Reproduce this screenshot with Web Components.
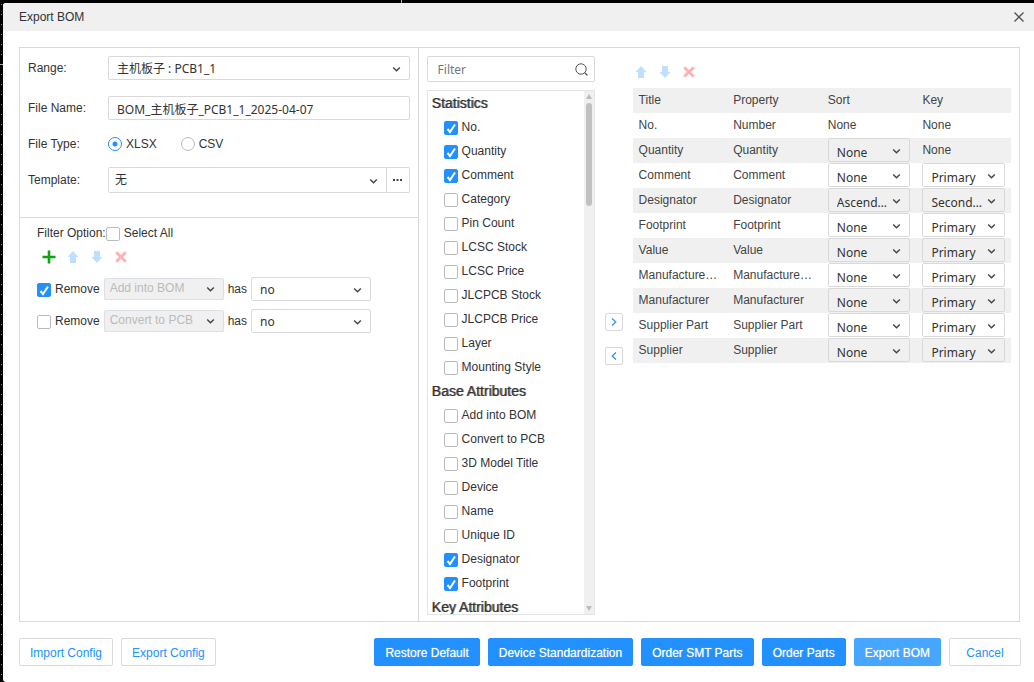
<!DOCTYPE html>
<html lang="en">
<head>
<meta charset="utf-8">
<title>Export BOM</title>
<style>
  html {
    height: 100%;
  }
  body {
    box-sizing: border-box;
    height: 100%;
    margin: 0;
    padding: 3px 0 0 3px;
    overflow: hidden;
    /* editor canvas behind the dialog: two axis ticks and the dot grid */
    background:
      linear-gradient(#aaa, #aaa) 401px 0 / 1px 3px no-repeat,
      linear-gradient(#aaa, #aaa) 0 64px / 3px 1px no-repeat,
      conic-gradient(from 90deg at 9px 9px, #888 90deg, transparent 0) 2px 5px / 10px 10px,
      #000;
    font-family: "Liberation Sans", Arial, "Noto Sans CJK SC", sans-serif;
    font-size: 12px;
    line-height: 16px;
    color: #333;
  }
</style>
</head>
<body>
  <export-dialog heading="Export BOM">
    <bom-options></bom-options>
    <attribute-list></attribute-list>
    <column-table></column-table>
    <dialog-button slot="left">Import Config</dialog-button>
    <dialog-button slot="left">Export Config</dialog-button>
    <dialog-button slot="right" kind="primary">Restore Default</dialog-button>
    <dialog-button slot="right" kind="primary">Device Standardization</dialog-button>
    <dialog-button slot="right" kind="primary">Order SMT Parts</dialog-button>
    <dialog-button slot="right" kind="primary">Order Parts</dialog-button>
    <dialog-button slot="right" kind="primary hover">Export BOM</dialog-button>
    <dialog-button slot="right">Cancel</dialog-button>
  </export-dialog>

<script>
  // styles that every element with form controls needs
  const controls = `
    * { box-sizing: border-box; }
    button, input, select {
      margin: 0;
      font: inherit;
      color: inherit;
    }
    .text-input, select {
      display: block;
      width: 100%;
      height: 24px;
      padding: 2px 8px 0;
      border: 1px solid #d9d9d9;
      border-radius: 2px;
      outline: none;
      background: transparent;
      font-family: "Noto Sans", "Noto Sans CJK SC", sans-serif;
      font-size: 12px;
    }
    select {
      appearance: none;
      padding-right: 21px;
      text-overflow: ellipsis;
      white-space: nowrap;
      overflow: hidden;
    }
    .select {
      display: grid;
      align-items: center;
    }
    .select > * { grid-area: 1 / 1; }
    .select svg {
      justify-self: end;
      margin: 2px 9px 0 0;
      pointer-events: none;
    }
    .icon-button {
      display: grid;
      place-items: center;
      width: 16px;
      height: 16px;
      padding: 0;
      border: 0;
      background: none;
    }
    .toolbar {
      display: flex;
      gap: 8px;
    }
    svg { display: block; }
  `;

  const icons = {
    chevron: `<svg width="9" height="7" viewBox="0 0 9 7"><path d="M1.200 1.500l3.300 3.300 3.300-3.300" fill="none" stroke="#444" stroke-width="1.400"/></svg>`,
    up: `<svg width="12" height="12" viewBox="0 0 12 12"><path d="M6 0l5.500 6H9v6H3V6H.5z" fill="#bfdfff"/></svg>`,
    down: `<svg width="12" height="12" viewBox="0 0 12 12"><path d="M6 12L.5 6H3V0h6v6h2.500z" fill="#bfdfff"/></svg>`,
    remove: `<svg width="12" height="12" viewBox="0 0 12 12"><path d="M1.200 1.200l9.600 9.600M10.800 1.200L1.200 10.800" stroke="#ffb0b0" stroke-width="2.800"/></svg>`,
    add: `<svg width="14" height="14" viewBox="0 0 14 14"><path d="M7 .5v13M.5 7h13" stroke="#13a013" stroke-width="2.600"/></svg>`,
    close: `<svg width="10" height="10" viewBox="0 0 10 10"><path d="M.5 .5l9 9M9.500 .5l-9 9" stroke="#555" stroke-width="1.400"/></svg>`,
    search: `<svg width="13" height="13" viewBox="0 0 13 13"><circle cx="6" cy="6" r="5.200" fill="none" stroke="#555"/><path d="M9.700 9.700l2.800 2.800" stroke="#555" stroke-width="1.200"/></svg>`,
    right: `<svg width="6" height="8" viewBox="0 0 6 8"><path d="M1 .5L4.800 4 1 7.500" fill="none" stroke="#2291ff" stroke-width="1.200"/></svg>`,
    left: `<svg width="6" height="8" viewBox="0 0 6 8"><path d="M5 .5L1.200 4 5 7.500" fill="none" stroke="#2291ff" stroke-width="1.200"/></svg>`,
  };

  function select(label, options, attrs = "") {
    return `
      <span class="select">
        <select aria-label="${label}" ${attrs}>
          ${options.map((option) => `<option>${option}</option>`).join("")}
        </select>
        ${icons.chevron}
      </span>`;
  }

  function iconButton(icon, label) {
    return `<button type="button" class="icon-button" aria-label="${label}">${icons[icon]}</button>`;
  }

  customElements.define(
    "dialog-button",
    class DialogButton extends HTMLElement {
      constructor() {
        super();
        this.attachShadow({mode: "open"});
      }

      connectedCallback() {
        this.shadowRoot.innerHTML = `
          <style>
            :host { display: block; }
            button {
              display: block;
              box-sizing: border-box;
              min-width: 72px;
              height: 28px;
              padding: 2px 10px 0;
              border: 1px solid #d9d9d9;
              border-radius: 2px;
              background: #fff;
              color: #2291ff;
              font: inherit;
              white-space: nowrap;
            }
            .primary {
              border-color: #2291ff;
              background: #2291ff;
              color: #fff;
              text-shadow: 0 0 1px rgba(255, 255, 255, 0.6);
            }
            .hover {
              border-color: #47a6ff;
              background: #47a6ff;
            }
          </style>
          <button type="button" class="${this.getAttribute("kind") || ""}"><slot></slot></button>
        `;
      }
    }
  );

  customElements.define(
    "check-box",
    class CheckBox extends HTMLElement {
      constructor() {
        super();
        this.attachShadow({mode: "open"});
      }

      connectedCallback() {
        this.shadowRoot.innerHTML = `
          <style>
            :host { display: inline-block; }
            label {
              display: flex;
              gap: 4px;
              white-space: nowrap;
            }
            .box {
              display: grid;
              place-items: center;
              margin-top: 2px;
              height: 14px;
            }
            .box > * { grid-area: 1 / 1; }
            input {
              appearance: none;
              box-sizing: border-box;
              width: 14px;
              height: 14px;
              margin: 0;
              border: 1px solid #bbb;
              border-radius: 2px;
              background: #fff;
            }
            input:checked {
              border-color: #2291ff;
              background: #2291ff;
            }
            svg {
              display: none;
              pointer-events: none;
            }
            input:checked + svg { display: block; }
          </style>
          <label>
            <span class="box">
              <input type="checkbox" ${this.hasAttribute("checked") ? "checked" : ""}>
              <svg width="14" height="14" viewBox="0 0 14 14"><path d="M3.500 8l2.500 3L11 3.500" fill="none" stroke="#fff" stroke-width="2"/></svg>
            </span>
            <slot></slot>
          </label>
        `;
      }
    }
  );

  customElements.define(
    "filter-rule",
    class FilterRule extends HTMLElement {
      constructor() {
        super();
        this.attachShadow({mode: "open"});
      }

      connectedCallback() {
        const checked = this.hasAttribute("checked") ? "checked" : "";
        this.shadowRoot.innerHTML = `
          <style>
            ${controls}
            :host {
              display: flex;
              align-items: center;
              gap: 4px;
              height: 24px;
            }
            .select { width: 120px; }
            select:disabled {
              height: 22px;
              padding: 0 21px 2px 5px;
              border-color: #dcdfe6;
              background: #f0f0f0;
              color: #bbb;
              opacity: 1;
              font-family: inherit;
            }
            select:disabled + svg { margin-top: 0; }
          </style>
          <check-box ${checked}>Remove</check-box>
          ${select("Property", [this.getAttribute("property")], "disabled")}
          <span>has</span>
          ${select("Value", ["no", "yes"])}
        `;
      }
    }
  );

  customElements.define(
    "bom-options",
    class BomOptions extends HTMLElement {
      constructor() {
        super();
        this.attachShadow({mode: "open"});
      }

      connectedCallback() {
        this.shadowRoot.innerHTML = `
          <style>
            ${controls}
            :host {
              display: block;
              box-sizing: border-box;
              flex: 0 0 calc(40% - 1px);
              border-right: 1px solid #d9d9d9;
            }
            .fields {
              display: grid;
              grid-template-columns: 80px 1fr;
              grid-template-rows: 24px 24px 15px 26px;
              align-items: center;
              row-gap: 16px;
              padding: 8px 8px 24px;
              border-bottom: 1px solid #d9d9d9;
            }
            .types {
              display: flex;
              gap: 24px;
            }
            .types label {
              display: flex;
              align-items: center;
              gap: 4px;
            }
            input[type=radio] {
              appearance: none;
              width: 14px;
              height: 14px;
              border: 1px solid #bbb;
              border-radius: 50%;
            }
            input[type=radio]:checked {
              border-color: #2291ff;
              background: radial-gradient(circle, #2291ff 2px, transparent 3px);
            }
            .template { display: flex; }
            .template .select { flex: 1; }
            .template select {
              height: 26px;
              padding: 0 21px 0 6px;
              border-radius: 2px 0 0 2px;
            }
            .more {
              display: grid;
              place-items: center;
              width: 23px;
              padding: 0;
              border: 1px solid #d9d9d9;
              border-left: 0;
              border-radius: 0 2px 2px 0;
              background: #fff;
            }
            .filters { padding: 7px 17px; }
            .head {
              display: flex;
              align-items: center;
              margin-bottom: 8px;
            }
            .filters .toolbar {
              padding: 0 4px;
              margin-bottom: 12px;
            }
            filter-rule + filter-rule { margin-top: 8px; }
          </style>

          <div class="fields">
            <label for="range">Range:</label>
            <span class="select">
              <select id="range"><option>主机板子 : PCB1_1</option></select>
              ${icons.chevron}
            </span>
            <label for="file-name">File Name:</label>
            <input class="text-input" id="file-name" value="BOM_主机板子_PCB1_1_2025-04-07">
            <span id="type-label">File Type:</span>
            <div class="types" role="radiogroup" aria-labelledby="type-label">
              <label><input type="radio" name="type" checked>XLSX</label>
              <label><input type="radio" name="type">CSV</label>
            </div>
            <label for="template">Template:</label>
            <div class="template">
              <span class="select">
                <select id="template"><option>无</option></select>
                ${icons.chevron}
              </span>
              <button type="button" class="more" aria-label="Manage templates">
                <svg width="9" height="2" viewBox="0 0 9 2"><path d="M0 0h2v2H0zM3.500 0h2v2h-2zM7 0h2v2H7z" fill="#444"/></svg>
              </button>
            </div>
          </div>

          <div class="filters">
            <div class="head"><span>Filter Option:</span><check-box>Select All</check-box></div>
            <div class="toolbar">
              ${iconButton("add", "Add")}
              ${iconButton("up", "Move up")}
              ${iconButton("down", "Move down")}
              ${iconButton("remove", "Delete")}
            </div>
            <filter-rule property="Add into BOM" checked></filter-rule>
            <filter-rule property="Convert to PCB"></filter-rule>
          </div>
        `;
      }
    }
  );

  const attributes = [
    ["Statistics", ["No.", "Quantity", "Comment", "Category", "Pin Count", "LCSC Stock", "LCSC Price",
      "JLCPCB Stock", "JLCPCB Price", "Layer", "Mounting Style"]],
    ["Base Attributes", ["Add into BOM", "Convert to PCB", "3D Model Title", "Device", "Name",
      "Unique ID", "Designator", "Footprint"]],
    ["Key Attributes", []],
  ];
  const picked = ["No.", "Quantity", "Comment", "Designator", "Footprint"];

  customElements.define(
    "attribute-list",
    class AttributeList extends HTMLElement {
      constructor() {
        super();
        this.attachShadow({mode: "open"});
      }

      connectedCallback() {
        this.shadowRoot.innerHTML = `
          <style>
            ${controls}
            :host {
              display: flex;
              box-sizing: border-box;
              flex: 0 0 176px;
              flex-direction: column;
              gap: 8px;
              padding: 8px 0 6px 8px;
              min-height: 0;
            }
            .search {
              display: grid;
              align-items: center;
            }
            .search > * { grid-area: 1 / 1; }
            .search svg {
              justify-self: end;
              margin-right: 7px;
            }
            .search input {
              height: 26px;
              padding: 0 28px 0 10px;
            }
            input::placeholder {
              color: #777;
              opacity: 1;
            }
            .list {
              display: flex;
              flex: 1;
              min-height: 0;
              border: 1px solid #e4e4e4;
            }
            .items {
              flex: 1;
              overflow: hidden;
              padding-left: 4px;
            }
            h3 {
              margin: 0;
              font-size: 14px;
              font-weight: normal;
              line-height: 24px;
              text-shadow: 1px 0 0 rgba(51, 51, 51, 0.6);
            }
            check-box {
              display: block;
              height: 24px;
              padding: 4px 0 4px 12px;
              box-sizing: border-box;
            }
            .bar {
              display: flex;
              flex-direction: column;
              align-items: center;
              width: 10px;
              padding: 3px 0;
              background: #f0f0f0;
            }
            .thumb {
              width: 6px;
              height: 20%;
              margin: 4px 0 auto;
              border-radius: 3px;
              background: #c1c1c1;
            }
          </style>
          <div class="search">
            <input class="text-input" type="text" placeholder="Filter" aria-label="Filter">
            ${icons.search}
          </div>
          <div class="list">
            <div class="items">
              ${attributes.map(([group, names]) => `
                <h3>${group}</h3>
                ${names.map((name) => `<check-box ${picked.includes(name) ? "checked" : ""}>${name}</check-box>`).join("")}
              `).join("")}
            </div>
            <div class="bar">
              <svg width="6" height="5" viewBox="0 0 6 5"><path d="M3 0l3 5H0z" fill="#bbb"/></svg>
              <div class="thumb"></div>
              <svg width="6" height="5" viewBox="0 0 6 5"><path d="M3 5L0 0h6z" fill="#bbb"/></svg>
            </div>
          </div>
        `;
      }
    }
  );

  // title, property, sort, key; null when the value can't be changed
  const sorts = ["None", "Ascending", "Descending"];
  const keys = ["Primary", "Secondary"];
  const columns = [
    ["No.", "Number", null, null],
    ["Quantity", "Quantity", "None", null],
    ["Comment", "Comment", "None", "Primary"],
    ["Designator", "Designator", "Ascending", "Secondary"],
    ["Footprint", "Footprint", "None", "Primary"],
    ["Value", "Value", "None", "Primary"],
    ["Manufacturer Part", "Manufacturer Part", "None", "Primary"],
    ["Manufacturer", "Manufacturer", "None", "Primary"],
    ["Supplier Part", "Supplier Part", "None", "Primary"],
    ["Supplier", "Supplier", "None", "Primary"],
  ];

  customElements.define(
    "column-table",
    class ColumnTable extends HTMLElement {
      constructor() {
        super();
        this.attachShadow({mode: "open"});
      }

      cell(label, options, value) {
        if (value === null) {
          return "<td>None</td>";
        }
        const sorted = [value, ...options.filter((option) => option !== value)];
        return `<td>${select(label, sorted)}</td>`;
      }

      connectedCallback() {
        this.shadowRoot.innerHTML = `
          <style>
            ${controls}
            :host {
              display: flex;
              box-sizing: border-box;
              flex: 1;
              gap: 10px;
              min-width: 0;
              padding: 8px 8px 0 10px;
            }
            .transfer {
              display: flex;
              flex-direction: column;
              justify-content: center;
              gap: 16px;
            }
            .transfer .icon-button {
              width: 18px;
              height: 18px;
              border: 1px solid #d9d9d9;
              border-radius: 2px;
            }
            .columns {
              flex: 1;
              min-width: 0;
            }
            .toolbar { padding: 8px 0; }
            table {
              width: 100%;
              table-layout: fixed;
              border-collapse: collapse;
              color: #444;
            }
            th, td {
              height: 25px;
              padding: 0 6px;
              overflow: hidden;
              font-weight: normal;
              line-height: 24px;
              text-align: left;
              text-overflow: ellipsis;
              vertical-align: top;
              white-space: nowrap;
            }
            thead tr, tbody tr:nth-child(even) { background: #f0f0f0; }
            select { color: #333; }
          </style>
          <div class="transfer">
            ${iconButton("right", "Add column")}
            ${iconButton("left", "Remove column")}
          </div>
          <div class="columns">
            <div class="toolbar">
              ${iconButton("up", "Move up")}
              ${iconButton("down", "Move down")}
              ${iconButton("remove", "Delete")}
            </div>
            <table>
              <thead>
                <tr><th>Title</th><th>Property</th><th>Sort</th><th>Key</th></tr>
              </thead>
              <tbody>
                ${columns.map(([title, property, sort, key]) => `
                  <tr>
                    <td>${title}</td>
                    <td>${property}</td>
                    ${this.cell(`${title} sort`, sorts, sort)}
                    ${this.cell(`${title} key`, keys, key)}
                  </tr>
                `).join("")}
              </tbody>
            </table>
          </div>
        `;
      }
    }
  );

  customElements.define(
    "export-dialog",
    class ExportDialog extends HTMLElement {
      constructor() {
        super();
        this.attachShadow({mode: "open"});
      }

      connectedCallback() {
        this.shadowRoot.innerHTML = `
          <style>
            ${controls}
            :host {
              display: flex;
              flex-direction: column;
              height: 100%;
              overflow: hidden;
              border-radius: 3px 0 0 3px;
              background: #fff;
            }
            header {
              display: flex;
              align-items: center;
              justify-content: space-between;
              height: 28px;
              padding: 0 7px 0 16px;
              background: #f0f0f0;
            }
            h2 {
              margin: 0;
              font-size: 12px;
              font-weight: normal;
            }
            .panel {
              display: flex;
              flex: 1;
              min-height: 0;
              margin: 16px 14px 16px 16px;
              border: 1px solid #d9d9d9;
            }
            footer {
              display: flex;
              justify-content: space-between;
              padding: 0 13px 16px 16px;
            }
            .group {
              display: flex;
              gap: 8px;
            }
          </style>
          <header>
            <h2>${this.getAttribute("heading")}</h2>
            ${iconButton("close", "Close")}
          </header>
          <div class="panel"><slot></slot></div>
          <footer>
            <div class="group"><slot name="left"></slot></div>
            <div class="group"><slot name="right"></slot></div>
          </footer>
        `;
      }
    }
  );
</script>
</body>
</html>
